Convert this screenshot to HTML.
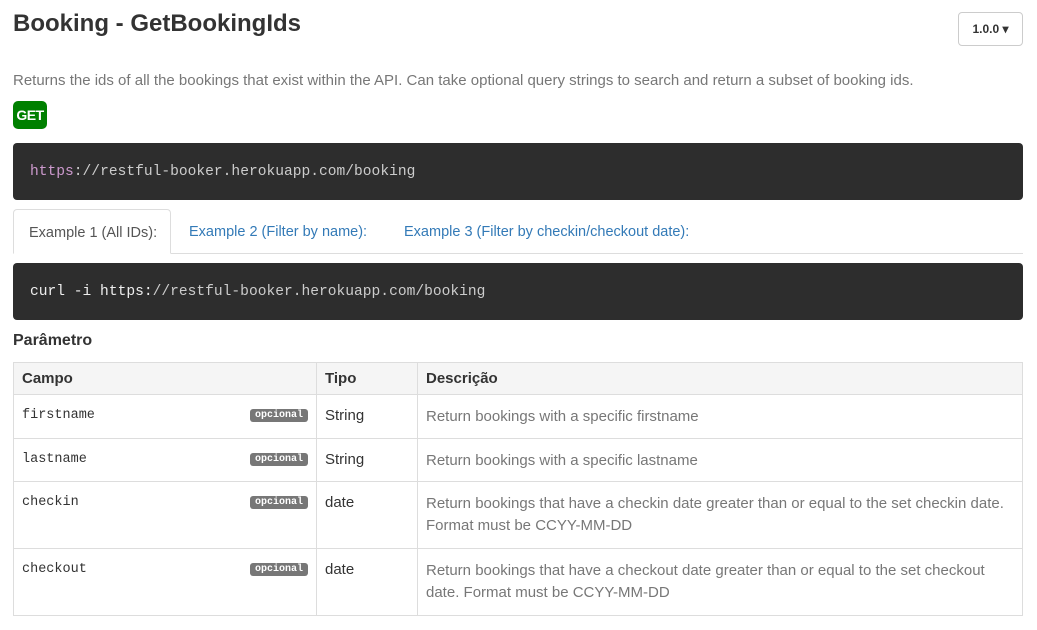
<!DOCTYPE html>
<html><head><meta charset="utf-8"><style>
*{box-sizing:border-box;margin:0;padding:0}
body{width:1037px;height:630px;background:#fff;font-family:"Liberation Sans",sans-serif;color:#333;position:relative;overflow:hidden}
.a{position:absolute}
h1{position:absolute;left:13px;top:10px;font-size:24px;font-weight:bold;color:#333}
.ver{left:958px;top:12px;width:65px;height:34px;border:1px solid #ccc;border-radius:4px;font-size:12px;font-weight:bold;line-height:32px;text-align:center}
.desc{left:13px;top:71px;font-size:15px;color:#777;white-space:nowrap}
.get{left:13px;top:101px;width:34px;height:28px;background:#008000;color:#fff;border-radius:5px;font-weight:bold;font-size:14px;line-height:28px;text-align:center;letter-spacing:-0.5px}
.code{left:13px;width:1010px;height:57px;background:#2d2d2d;border-radius:4px;font-family:"Liberation Mono",monospace;font-size:14.6px;color:#ccc;line-height:58px;padding-left:17px;white-space:nowrap}
.tabs{left:13px;top:209px;width:1010px;height:45px;border-bottom:1px solid #ddd}
.tab{position:absolute;top:0;height:45px;line-height:46px;font-size:14.5px;color:#337ab7;white-space:nowrap}
.tab.on{border:1px solid #ddd;border-bottom:1px solid #fff;border-radius:4px 4px 0 0;color:#555;background:#fff;padding:0 15px}
table{position:absolute;left:13px;top:362px;width:1010px;border-collapse:collapse;font-size:15px}
td,th{border:1px solid #ddd;vertical-align:top;padding:8px;text-align:left}
th{background:#f5f5f5;height:32px;padding:7px 8px 0;line-height:17px}
.m{font-family:"Liberation Mono",monospace;font-size:13.5px;position:relative;padding-top:13px}
.lab{position:absolute;right:8px;top:14px;background:#777;color:#fff;font-size:10px;font-weight:bold;padding:1px 5px;border-radius:3px;font-family:"Liberation Mono",monospace}
.d{color:#777;line-height:22px;padding-top:11px}
</style></head><body>
<h1>Booking - GetBookingIds</h1>
<div class="a ver">1.0.0 ▾</div>
<div class="a desc" style="top:72px">Returns the ids of all the bookings that exist within the API. Can take optional query strings to search and return a subset of booking ids.</div>
<div class="a get">GET</div>
<div class="a code" style="top:143px"><span style="color:#cc99cd">https</span>://restful-booker.herokuapp.com/booking</div>
<div class="a tabs">
<div class="tab on" style="left:0;width:158px">Example 1 (All IDs):</div>
<div class="tab" style="left:176px">Example 2 (Filter by name):</div>
<div class="tab" style="left:391px">Example 3 (Filter by checkin/checkout date):</div>
</div>
<div class="a code" style="top:263px"><span style="color:#eee">curl -i https:</span>//restful-booker.herokuapp.com/booking</div>
<div class="a" style="left:13px;top:332px;font-size:16px;font-weight:bold">Parâmetro</div>
<table>
<tr style="height:32px"><th style="width:303px">Campo</th><th style="width:101px">Tipo</th><th>Descrição</th></tr>
<tr style="height:44px"><td class="m">firstname<span class="lab">opcional</span></td><td style="padding-top:12px">String</td><td class="d">Return bookings with a specific firstname</td></tr>
<tr style="height:43px"><td class="m">lastname<span class="lab">opcional</span></td><td style="padding-top:12px">String</td><td class="d">Return bookings with a specific lastname</td></tr>
<tr style="height:67px"><td class="m">checkin<span class="lab">opcional</span></td><td style="padding-top:12px">date</td><td class="d">Return bookings that have a checkin date greater than or equal to the set checkin date. Format must be CCYY-MM-DD</td></tr>
<tr style="height:67px"><td class="m">checkout<span class="lab">opcional</span></td><td style="padding-top:12px">date</td><td class="d">Return bookings that have a checkout date greater than or equal to the set checkout date. Format must be CCYY-MM-DD</td></tr>
</table>
</body></html>
